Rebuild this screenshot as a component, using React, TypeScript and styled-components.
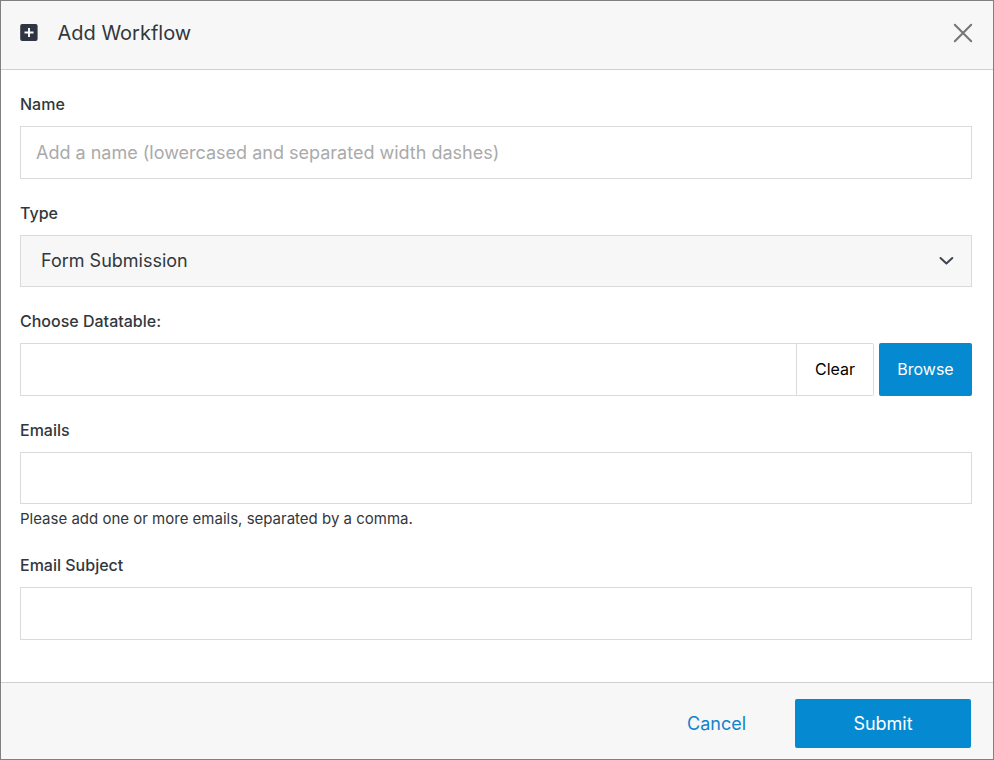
import React from "react";
import styled, { createGlobalStyle } from "styled-components";

const GlobalStyle = createGlobalStyle`
  *, *::before, *::after { box-sizing: border-box; }
  body {
    margin: 0;
    background: #fff;
    color: #32373c;
    font-family: Inter, "Liberation Sans", sans-serif;
  }
  button, input { font-family: inherit; }
`;

const Dialog = styled.form`
  display: flex;
  flex-direction: column;
  width: 994px;
  height: 760px;
  border: 1px solid #808080;
  background: #fff;
`;

const Header = styled.header`
  display: flex;
  align-items: center;
  height: 69px;
  padding: 0 20px 5px 19px;
  background: #f7f7f7;
  border-bottom: 1px solid #cfd0d1;
`;

const Title = styled.h1`
  flex: 1;
  margin: 0 0 0 19.5px;
  font-size: 20px;
  line-height: 24px;
  font-weight: 400;
`;

const IconButton = styled.button`
  display: flex;
  padding: 0;
  border: 0;
  background: none;
`;

const Body = styled.main`
  display: flex;
  flex-direction: column;
  gap: 23px;
  flex: 1;
  padding: 23px 21px 0 19px;
`;

const Field = styled.div`
  display: flex;
  flex-direction: column;
`;

const Label = styled.label`
  margin-bottom: 11px;
  font-size: 16px;
  line-height: 22px;
  font-weight: 500;
`;

const Input = styled.input<{ $height?: number }>`
  flex: 1 0 auto;
  min-width: 0;
  width: 100%;
  height: ${(p) => p.$height ?? 53}px;
  padding: 0 15px;
  border: 1px solid #d8dadb;
  border-radius: 0;
  outline: 0;
  background: #fff;
  color: inherit;
  font-size: 18px;
  &::placeholder { color: #aaa; opacity: 1; }
`;

const Select = styled.div`
  display: flex;
  align-items: center;
  justify-content: space-between;
  height: 52px;
  padding: 0 17px 1px 20px;
  border: 1px solid #d8dadb;
  background: #f7f7f7;
  font-size: 18px;
`;

const PickerRow = styled.div`
  display: grid;
  grid-template-columns: 777px 77px 93px;
  height: 53px;
`;

const Button = styled.button`
  padding: 0;
  border: 0;
  border-radius: 2px;
  background: #0589d1;
  color: #fff;
  font-size: 16px;
  font-weight: 400;
`;

const ClearButton = styled(Button)`
  padding-bottom: 1px;
  border: 1px solid #d8dadb;
  border-left: 0;
  border-radius: 0 2px 2px 0;
  background: #fff;
  color: #000;
`;

const BrowseButton = styled(Button)`
  margin-left: 5px;
  width: 93px;
  padding-bottom: 1px;
`;

const Hint = styled.p`
  margin: 4px 0 0;
  height: 23px;
  font-size: 15px;
  line-height: 22px;
`;

const Footer = styled.footer`
  display: flex;
  align-items: flex-start;
  justify-content: flex-end;
  gap: 24px;
  height: 77px;
  padding: 16px 22px 0;
  background: #f7f7f7;
  border-top: 1px solid #cfd0d1;
`;

const SubmitButton = styled(Button)`
  width: 176px;
  height: 49px;
  font-size: 18px;
`;

const CancelButton = styled(SubmitButton)`
  width: 109px;
  background: none;
  color: #1283cc;
`;

export default function App() {
  return (
    <>
      <GlobalStyle />
      <Dialog>
        <Header>
          <svg width="18" height="18" viewBox="0 0 18 18" aria-hidden="true">
            <rect x="0.2" y="0" width="17.4" height="17" rx="2" fill="#2f3542" />
            <path d="M9 4v9M4.5 8.5h9" stroke="#fff" strokeWidth="1.9" />
          </svg>
          <Title>Add Workflow</Title>
          <IconButton type="button" aria-label="Close">
            <svg width="20" height="20" viewBox="0 0 20 20" fill="none">
              <path d="M1.8 1.8l16.4 16.4M18.2 1.8L1.8 18.2" stroke="#757575" strokeWidth="2" strokeLinecap="round" />
            </svg>
          </IconButton>
        </Header>
        <Body>
          <Field>
            <Label htmlFor="name">Name</Label>
            <Input id="name" placeholder="Add a name (lowercased and separated width dashes)" />
          </Field>
          <Field>
            <Label>Type</Label>
            <Select>
              Form Submission
              <svg width="16" height="16" viewBox="0 0 16 16" fill="none" aria-hidden="true">
                <path d="M2.5 5l5.9 5.4L14.3 5" stroke="#3d4450" strokeWidth="2" strokeLinecap="round" strokeLinejoin="round" />
              </svg>
            </Select>
          </Field>
          <Field>
            <Label htmlFor="datatable">Choose Datatable:</Label>
            <PickerRow>
              <Input id="datatable" />
              <ClearButton type="button">Clear</ClearButton>
              <BrowseButton type="button">Browse</BrowseButton>
            </PickerRow>
          </Field>
          <Field>
            <Label htmlFor="emails">Emails</Label>
            <Input id="emails" $height={52} />
            <Hint>Please add one or more emails, separated by a comma.</Hint>
          </Field>
          <Field>
            <Label htmlFor="subject">Email Subject</Label>
            <Input id="subject" />
          </Field>
        </Body>
        <Footer>
          <CancelButton type="button">Cancel</CancelButton>
          <SubmitButton type="button">Submit</SubmitButton>
        </Footer>
      </Dialog>
    </>
  );
}
